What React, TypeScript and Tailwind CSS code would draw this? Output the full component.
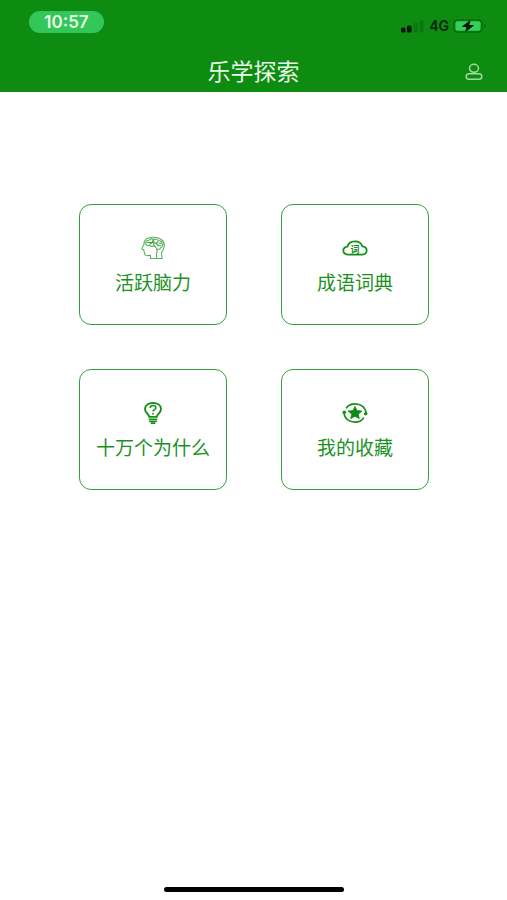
import { ReactNode } from "react";

const cjkFont = "font-['Noto_Sans_CJK_SC','Noto_Sans',sans-serif]";

function SignalIcon() {
  return (
    <svg width="24" height="14" viewBox="0 0 24 14" aria-hidden="true">
      <rect x="0" y="8.500" width="4.600" height="5" rx="1.500" fill="#03170a" />
      <rect x="6" y="6.500" width="4.600" height="7" rx="1.500" fill="#03170a" />
      <rect x="12.500" y="4" width="4" height="9.5" rx="1" fill="#0b770f" />
      <rect x="18.500" y="1.500" width="4" height="12" rx="1" fill="#0b770f" />
    </svg>
  );
}

function BatteryIcon() {
  return (
    <svg width="34" height="14" viewBox="0 0 34 14" aria-hidden="true">
      <rect x="1" y="1" width="28" height="12" rx="3.5" fill="none" stroke="#096d0e" strokeWidth="1.5" />
      <path d="M31 5c2 .5 2 3.500 0 4z" fill="#096d0e" />
      <rect x="2.500" y="2.200" width="25" height="9.600" rx="2" fill="#34cf5c" />
      <path
        d="M17 1.800 9.600 7.500h4.600L12.800 12.300 20.300 6.500H15.700z"
        fill="#031a06"
        stroke="#031a06"
        strokeWidth="1"
        strokeLinejoin="round"
      />
    </svg>
  );
}

function UserIcon() {
  return (
    <svg width="18" height="18" viewBox="0 0 18 18" fill="none" stroke="#9fdb9d" strokeWidth="1.5" aria-hidden="true">
      <ellipse cx="9" cy="5.300" rx="4.500" ry="4" />
      <rect x="1.200" y="10.700" width="15.600" height="5.600" rx="2.800" />
    </svg>
  );
}

function BrainIcon() {
  return (
    <svg
      width="26"
      height="24"
      viewBox="0 0 26 24"
      fill="none"
      stroke="#58b15b"
      strokeWidth="1.100"
      strokeLinecap="round"
      strokeLinejoin="round"
      aria-hidden="true"
    >
      <path d="M10.500 22.500v-3.200c-2.500.5-5.200.8-5.700-.7-.3-1 .2-1.800-.4-2.500-.6-.8-.8-1.500-.4-2.200-1.600-.4-2.500-.9-2-1.800.8-1.400 2-2.500 1.900-4.100C4 3.500 8 1.300 13.500 1.300c6.400 0 10.800 3.200 10.800 8.200 0 2.700-1 4.600-2.300 6.400-.7 1.200-.3 4 .3 6.600z" />
      <path d="M5.700 8c-.2-2.500 1.400-3.800 3.300-3.800C10 2.500 12.500 2.500 13.500 3.700c1.500-1 4-.6 4.700.8 2 0 3.800 1.300 3.800 3.200 1 1.500.4 3.500-1.300 4.100-.5 1.400-2.200 1.900-3.700 1.500v2.900c-1 1.600-.6 3.800-.2 5.300" />
      <path d="M5.700 8c.7 1.800 2.600 2 4 1.300 1.200 1.500 3.500 1.400 4.800.2l2.500 3.800" />
      <g stroke="#3aa23e">
        <path d="M7.500 6.500h4M10 8l2.500-1.500V4.800M13.800 4v5M13.800 7h2.400M18 5.500l-1.500 2.300 1.700 1.900M18.200 9.700h2.300M19 7.300h2" />
      </g>
    </svg>
  );
}

function CloudIcon() {
  return (
    <svg width="26" height="24" viewBox="0 0 26 24" fill="none" aria-hidden="true">
      <path
        d="M6.500 18.700C3.500 18.700 1.300 17 1.300 14.600c0-2.200 1.800-3.700 4.200-4C6.200 7.300 9 5.300 12.800 5.300s6.700 2 7.500 5.100c2.600.3 4.400 1.900 4.400 4.200 0 2.400-2.200 4.100-5.100 4.100z"
        stroke="#148f19"
        strokeWidth="1.800"
        strokeLinejoin="round"
      />
      <text
        x="13"
        y="16.500"
        textAnchor="middle"
        fontSize="9"
        fontWeight="700"
        fontFamily="'Noto Sans CJK SC', sans-serif"
        fill="#148f19"
      >
        词
      </text>
    </svg>
  );
}

function BulbIcon() {
  return (
    <svg width="26" height="24" viewBox="0 0 26 24" fill="none" stroke="#148f19" aria-hidden="true">
      <path
        d="M9.300 15.900c0-2.600-4.300-3.800-4.300-7.900C5 4.200 8.600 2 13 2s8 2.200 8 6c0 4.100-4.300 5.300-4.300 7.900z"
        strokeWidth="1.900"
        strokeLinejoin="round"
      />
      <path d="M10.200 6.900c0-1.500 1.200-2.400 2.800-2.400s2.900.9 2.900 2.200c0 1.800-2.900 1.900-2.900 3.900" strokeWidth="1.500" />
      <path d="M13 11.900v1.600" strokeWidth="1.700" />
      <path d="M9.300 18.200h7.400M9.800 20.400h6.400M11.300 22.300h3.400" strokeWidth="1.600" strokeLinecap="round" />
    </svg>
  );
}

function StarIcon() {
  return (
    <svg width="26" height="24" viewBox="0 0 26 24" fill="none" aria-hidden="true">
      <path
        d="M4.500 6.800C6.300 4.200 9.400 2.900 13 2.900c6 0 10.600 3.700 11 9.200M21.500 17.200c-1.800 2.500-4.900 3.900-8.500 3.900-6 0-10.600-3.700-11-9.200"
        stroke="#148f19"
        strokeWidth="1.600"
        strokeLinecap="round"
      />
      <circle cx="23.700" cy="12.700" r="1.800" fill="#148f19" />
      <circle cx="2.300" cy="11.300" r="1.800" fill="#148f19" />
      <path
        d="m13 5.500 2 4.100 5 .5-3.700 3 1 4.500L13 15.300l-4.300 2.300 1-4.500L6 10.100l5-.5z"
        fill="#0c8c12"
        stroke="#0c8c12"
        strokeWidth=".8"
        strokeLinejoin="round"
      />
    </svg>
  );
}

interface MenuCardProps {
  icon: ReactNode;
  label: string;
}

function MenuCard({ icon, label }: MenuCardProps) {
  return (
    <button
      type="button"
      className="flex h-[121px] flex-col items-center justify-center gap-[10px] rounded-xl border border-[#37a03b] bg-white"
    >
      {icon}
      <span className="text-[19px] leading-6 whitespace-nowrap text-[#1d911f]">{label}</span>
    </button>
  );
}

const menuItems: MenuCardProps[] = [
  { icon: <BrainIcon />, label: "活跃脑力" },
  { icon: <CloudIcon />, label: "成语词典" },
  { icon: <BulbIcon />, label: "十万个为什么" },
  { icon: <StarIcon />, label: "我的收藏" },
];

export default function App() {
  return (
    <div className={`flex min-h-screen flex-col bg-white ${cjkFont}`}>
      <header className="bg-[#0e8c12] pb-1">
        {/* Status bar */}
        <div className="flex h-12 items-start justify-between pr-5 pl-[29px] font-[Inter,sans-serif] font-semibold">
          <div className="mt-[11px] flex h-[22px] w-[75px] items-center justify-center rounded-full bg-[#33c759] text-[17px] leading-none text-[#e9fbe8]">
            10:57
          </div>
          <div className="mt-[19px] flex items-center gap-1 text-[#03230a]">
            <SignalIcon />
            <span className="text-sm leading-none">4G</span>
            <BatteryIcon />
          </div>
        </div>

        {/* Nav bar */}
        <div className="grid h-10 grid-cols-[1fr_auto_1fr] items-center px-6">
          <h1 className="col-start-2 pt-1 text-[23px] leading-8 text-[#eaf8e8]">乐学探索</h1>
          <button type="button" aria-label="我的" className="justify-self-end pt-2">
            <UserIcon />
          </button>
        </div>
      </header>

      <main className="grid flex-1 grid-cols-2 content-start gap-x-[54px] gap-y-11 pt-28 pr-[78px] pl-[79px]">
        {menuItems.map((item) => (
          <MenuCard key={item.label} icon={item.icon} label={item.label} />
        ))}
      </main>

      {/* Home indicator */}
      <div className="flex justify-center pb-2">
        <div className="h-[5px] w-[180px] rounded-full bg-black" />
      </div>
    </div>
  );
}
